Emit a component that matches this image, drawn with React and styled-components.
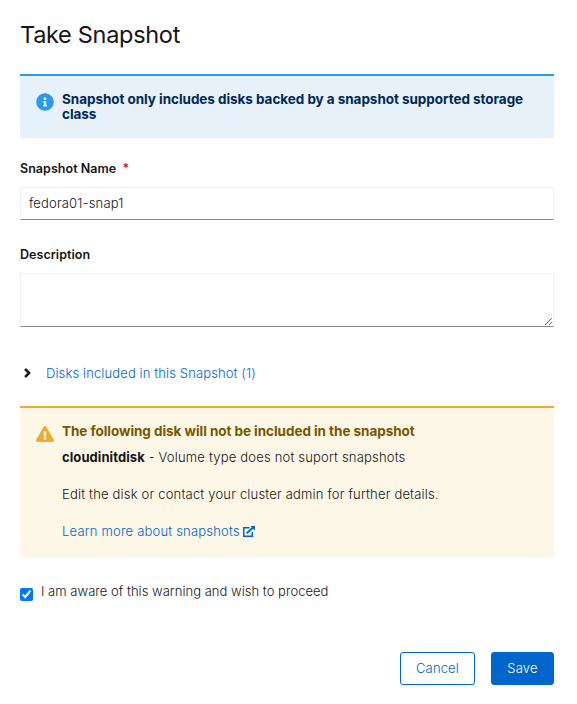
import React from 'react';
import styled, { createGlobalStyle } from 'styled-components';
import { FaInfoCircle, FaExclamationTriangle, FaAngleRight } from 'react-icons/fa';

const GlobalStyle = createGlobalStyle`
  *, *::before, *::after { box-sizing: border-box; }
  body {
    margin: 0;
    background: #fff;
    color: #151515;
    font-family: Inter, "Liberation Sans", sans-serif;
    font-size: 13px;
    font-weight: 350;
  }
`;

const Dialog = styled.main`
  display: flex;
  flex-direction: column;
  width: 577px;
  height: 704px;
  padding: 17px 23px 0 20px;
  background: #fff;
`;

const Title = styled.h1`
  margin: 0 0 21px;
  font-size: 23.5px;
  font-weight: 400;
  line-height: 36px;
  letter-spacing: -0.3px;
`;

const tones = {
  info: { line: '#2b9af3', fill: '#e7f1fa', title: '#002952' },
  warning: { line: '#f0ab2e', fill: '#fdf7e7', title: '#795600' },
};

const AlertBox = styled.section`
  display: flex;
  align-items: flex-start;
  gap: 8px;
  flex: none;
  height: ${(p) => (p.$tone === 'info' ? 64 : 152)}px;
  padding: 16px 16px 0;
  border-top: 2px solid ${(p) => tones[p.$tone].line};
  background: ${(p) => tones[p.$tone].fill};

  > svg {
    flex: none;
    width: 18px;
    height: 18px;
    margin-top: 1px;
    color: ${(p) => tones[p.$tone].line};
  }
`;

const AlertTitle = styled.h2`
  margin: 0;
  color: ${(p) => tones[p.$tone].title};
  font-size: 13.5px;
  font-weight: 700;
  line-height: 15px;
  letter-spacing: -0.05px;
`;

const AlertBody = styled.div`
  padding-top: 8px;
`;

const AlertText = styled.p`
  margin: 0 0 16px;
  line-height: 21px;
  letter-spacing: 0.19px;

  strong {
    font-weight: 700;
    letter-spacing: 0.08px;
  }
`;

const Link = styled.a`
  display: inline-flex;
  align-items: center;
  gap: 3px;
  color: #06c;
  line-height: 21px;
  letter-spacing: 0.2px;
  text-decoration: none;
`;

const Field = styled.div`
  display: flex;
  flex-direction: column;
  margin-top: ${(p) => p.$top}px;
`;

const Label = styled.label`
  margin-bottom: 9px;
  font-size: 12.5px;
  font-weight: 600;
  line-height: 18px;
  letter-spacing: 0.04px;
`;

const Required = styled.span`
  margin-left: 3px;
  color: #c9190b;
`;

const Input = styled.input`
  height: 33px;
  padding: 0 8px 2px;
  border: 1px solid #f0f0f0;
  border-bottom-color: #8a8d90;
  border-radius: 0;
  outline: none;
  background: #fff;
  color: #151515;
  font: inherit;
  letter-spacing: 0.18px;
`;

const TextArea = styled.textarea`
  height: 54px;
  padding: 5px 8px;
  border: 1px solid #f0f0f0;
  border-bottom-color: #8a8d90;
  border-radius: 0;
  outline: none;
  background: #fff;
  font: inherit;
  resize: vertical;
`;

const Toggle = styled.button`
  display: flex;
  align-items: center;
  gap: 12px;
  height: 21px;
  margin: 35px 0 23px;
  padding: 0 0 0 1px;
  border: 0;
  background: none;
  color: #06c;
  font: inherit;
  letter-spacing: 0.12px;

  svg {
    width: 13px;
    height: 14px;
    color: #151515;
    stroke: currentColor;
    stroke-width: 18;
  }
`;

const Confirm = styled.label`
  display: flex;
  align-items: flex-start;
  gap: 8px;
  margin-top: 23px;
  line-height: 21px;
  letter-spacing: 0.03px;
`;

const Checkbox = styled.input`
  width: 13px;
  height: 13px;
  margin: 7px 0 0;
  accent-color: #0075ff;
`;

const Actions = styled.footer`
  display: flex;
  justify-content: flex-end;
  gap: 16px;
  margin-top: 50px;
`;

const Button = styled.button`
  width: ${(p) => (p.$primary ? 63 : 75)}px;
  height: 33px;
  padding: 0 0 2px;
  border: 1px solid #06c;
  border-radius: 3px;
  background: ${(p) => (p.$primary ? '#06c' : '#fff')};
  color: ${(p) => (p.$primary ? '#fff' : '#06c')};
  font: inherit;
  letter-spacing: 0.15px;
`;

const ExternalIcon = () => (
  <svg width="12" height="11" viewBox="0 0 12 11" fill="none" stroke="currentColor" strokeWidth="1.5">
    <path d="M6.5 1.7H.8v8.5h8.5V6" />
    <path d="M3.7 7.4 10 1.5" strokeWidth="1.9" />
    <path d="M7.5 0H12v4.5Z" fill="currentColor" stroke="none" />
  </svg>
);

export default function App() {
  return (
    <>
      <GlobalStyle />
      <Dialog>
        <Title>Take Snapshot</Title>
        <AlertBox $tone="info">
          <FaInfoCircle />
          <AlertTitle $tone="info">
            Snapshot only includes disks backed by a snapshot supported storage class
          </AlertTitle>
        </AlertBox>
        <Field $top={22}>
          <Label htmlFor="name">
            Snapshot Name <Required>*</Required>
          </Label>
          <Input id="name" defaultValue="fedora01-snap1" />
        </Field>
        <Field $top={26}>
          <Label htmlFor="description">Description</Label>
          <TextArea id="description" />
        </Field>
        <Toggle type="button">
          <FaAngleRight />
          Disks included in this Snapshot (1)
        </Toggle>
        <AlertBox $tone="warning">
          <FaExclamationTriangle />
          <div>
            <AlertTitle $tone="warning">The following disk will not be included in the snapshot</AlertTitle>
            <AlertBody>
              <AlertText>
                <strong>cloudinitdisk</strong> - Volume type does not suport snapshots
              </AlertText>
              <AlertText>Edit the disk or contact your cluster admin for further details.</AlertText>
              <Link href="#">
                Learn more about snapshots
                <ExternalIcon />
              </Link>
            </AlertBody>
          </div>
        </AlertBox>
        <Confirm>
          <Checkbox type="checkbox" defaultChecked />
          I am aware of this warning and wish to proceed
        </Confirm>
        <Actions>
          <Button type="button">Cancel</Button>
          <Button type="button" $primary>Save</Button>
        </Actions>
      </Dialog>
    </>
  );
}
